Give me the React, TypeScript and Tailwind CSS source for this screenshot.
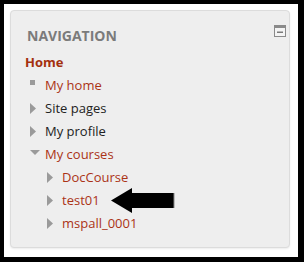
import React from 'react';

type Item = { label: string; color: 'link' | 'plain'; icon: 'bullet' | 'right' | 'down'; level: number };

const items: Item[] = [
  { label: 'My home', color: 'link', icon: 'bullet', level: 1 },
  { label: 'Site pages', color: 'plain', icon: 'right', level: 1 },
  { label: 'My profile', color: 'plain', icon: 'right', level: 1 },
  { label: 'My courses', color: 'link', icon: 'down', level: 1 },
  { label: 'DocCourse', color: 'link', icon: 'right', level: 2 },
  { label: 'test01', color: 'link', icon: 'right', level: 2 },
  { label: 'mspall_0001', color: 'link', icon: 'right', level: 2 },
];

function TreeIcon({ kind }: { kind: Item['icon'] }) {
  if (kind === 'bullet') {
    return <span className="block w-[5px] h-[5px] bg-[#9a9a9a] -mt-[6px]" />;
  }
  if (kind === 'down') {
    return (
      <svg width="10" height="6" viewBox="0 0 10 6" className="-mt-[4px]">
        <polygon points="0,0 10,0 5,5" fill="#9a9a9a" />
      </svg>
    );
  }
  return (
    <svg width="6" height="11" viewBox="0 0 6 11">
      <polygon points="0,0 6,5.5 0,11" fill="#9a9a9a" />
    </svg>
  );
}

function CollapseIcon() {
  return (
    <svg width="12" height="12" viewBox="0 0 12 12">
      <rect x="0.5" y="0.5" width="11" height="11" fill="#f4f4f4" stroke="#8a8a8a" />
      <rect x="0" y="0" width="12" height="3" fill="#8a8a8a" />
      <rect x="3" y="6.5" width="6" height="1.5" fill="#7a7a7a" />
    </svg>
  );
}

function Arrow() {
  return (
    <svg width="64" height="26" viewBox="0 0 64 26" className="ml-[11px]">
      <polygon points="0,12.5 21,0 21,5 63,5 63,20 21,20 21,25" fill="#000" />
      <line x1="63" y1="5" x2="63" y2="20" stroke="#888" strokeWidth="1" />
    </svg>
  );
}

export default function App() {
  return (
    <div className="w-[304px] h-[262px] bg-black pl-[4px] pt-[4px] pr-[6px] pb-[5px]">
      <div className="w-full h-full bg-white pl-[6px] pt-[6px] pr-[8px] pb-[9px]">
        <div
          className="w-full h-full rounded-[4px] border border-[#dcdcdc] bg-[#eeeeee] shadow-[0_1px_2px_rgba(0,0,0,0.08)] pl-[14px] pr-[3px] pt-[16px]"
          style={{ fontFamily: '"Open Sans", "DejaVu Sans", sans-serif' }}
        >
          <div className="flex items-start justify-between">
            <div className="text-[14px] leading-[24px] font-bold text-[#7b7b7b] mt-[-3px] ml-[2px]">NAVIGATION</div>
            <div className="-mt-[2px]">
              <CollapseIcon />
            </div>
          </div>
          <div className="mt-[3px]">
            <div className="h-[23px] flex items-center text-[13px] font-bold text-[#a3300e]">Home</div>
            {items.map((it) => (
              <div key={it.label} className={`h-[23px] flex items-center ${it.level === 2 ? 'pl-[22px]' : 'pl-[5px]'}`}>
                <div className="w-[15px] flex justify-start items-center">
                  <TreeIcon kind={it.icon} />
                </div>
                <span className={`text-[13px] leading-[23px] ${it.color === 'link' ? 'text-[#ab3316]' : 'text-[#222222]'}`}>
                  {it.label}
                </span>
                {it.label === 'test01' && <Arrow />}
              </div>
            ))}
          </div>
        </div>
      </div>
    </div>
  );
}
